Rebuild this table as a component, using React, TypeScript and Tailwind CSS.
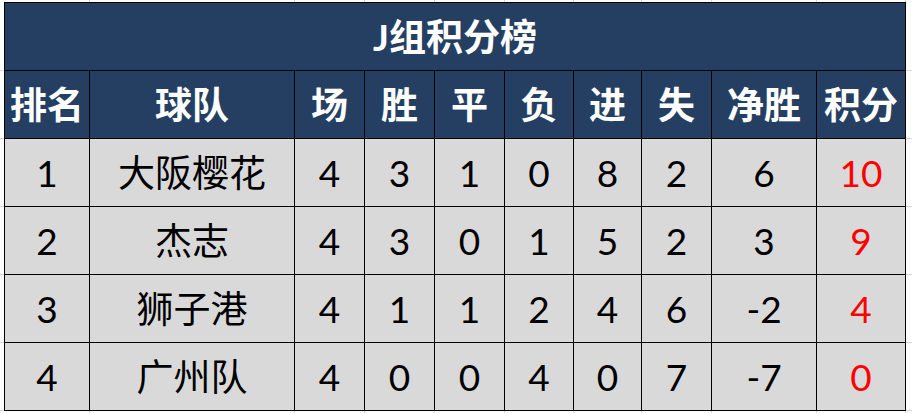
import React from "react";

const COLS =
  "grid-cols-[85px_205px_70px_70px_70px_69px_68px_70px_105px_89px]";

const headers = ["排名", "球队", "场", "胜", "平", "负", "进", "失", "净胜", "积分"];

const rows: (string | number)[][] = [
  [1, "大阪樱花", 4, 3, 1, 0, 8, 2, 6, 10],
  [2, "杰志", 4, 3, 0, 1, 5, 2, 3, 9],
  [3, "狮子港", 4, 1, 1, 2, 4, 6, -2, 4],
  [4, "广州队", 4, 0, 0, 4, 0, 7, -7, 0],
];

const navy = "bg-[#243f62]";

export default function App() {
  return (
    <div className="w-[912px] h-[413px] bg-white overflow-hidden font-[Lato,'Noto_Sans_CJK_SC',sans-serif] grid grid-cols-[4px_902px_6px] grid-rows-[2px_409px_2px]">
      {/* top-left corner */}
      <div />
      {/* top strip gridlines */}
      <div className={`grid ${COLS} pl-px`}>
        {headers.map((_, i) => (
          <div key={i} className="border-r border-[#d4d4d4]" />
        ))}
      </div>
      <div />

      {/* left strip gridlines */}
      <div className="grid grid-rows-[69px_68px_68px_68px_68px_68px]">
        {Array.from({ length: 6 }).map((_, i) => (
          <div key={i} className="border-b border-[#d4d4d4]" />
        ))}
      </div>

      {/* table */}
      <div
        className={`grid ${COLS} grid-rows-[68px_68px_68px_68px_68px_68px] border-l border-t border-black`}
      >
        <div
          className={`col-span-10 ${navy} border-r border-b border-black flex items-center justify-center text-white font-bold text-[37px] leading-none`}
        >
          J组积分榜
        </div>
        {headers.map((h) => (
          <div
            key={h}
            className={`${navy} border-r border-b border-black flex items-center justify-center text-white font-bold text-[37px] leading-none`}
          >
            {h}
          </div>
        ))}
        {rows.map((r, ri) =>
          r.map((v, ci) => (
            <div
              key={`${ri}-${ci}`}
              className={`bg-[#d9d9d9] border-r border-b border-black flex items-center justify-center leading-none text-[37px] ${
                ci === 9 ? "text-[#ff0000]" : "text-black"
              }`}
            >
              {v}
            </div>
          ))
        )}
      </div>

      {/* right strip gridlines */}
      <div className="grid grid-rows-[69px_68px_68px_68px_68px_68px]">
        {Array.from({ length: 6 }).map((_, i) => (
          <div key={i} className="border-b border-[#d4d4d4]" />
        ))}
      </div>

      {/* bottom strip */}
      <div />
      <div className={`grid ${COLS} pl-px`}>
        {headers.map((_, i) => (
          <div key={i} className="border-r border-[#d4d4d4]" />
        ))}
      </div>
      <div />
    </div>
  );
}
